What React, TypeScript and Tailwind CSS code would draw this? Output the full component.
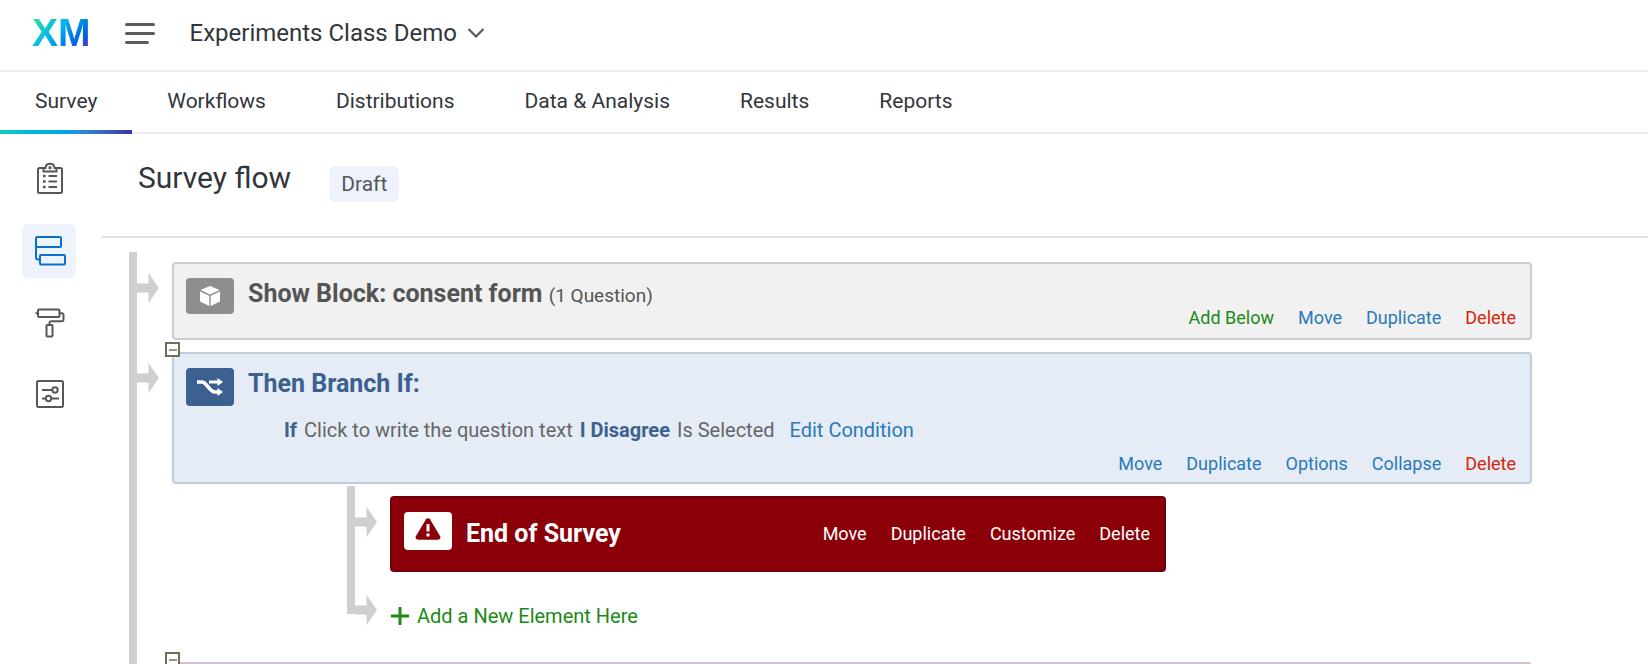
import type { ReactNode } from "react";

const tabs = ["Survey", "Workflows", "Distributions", "Data & Analysis", "Results", "Reports"];

type Action = { label: string; tone: string };

const blue = "text-[#2a7ab8]";
const red = "text-[#d3260b]";
const green = "text-[#1c8a17]";

const blockActions: Action[] = [
  { label: "Add Below", tone: green },
  { label: "Move", tone: blue },
  { label: "Duplicate", tone: blue },
  { label: "Delete", tone: red },
];

const branchActions: Action[] = [
  { label: "Move", tone: blue },
  { label: "Duplicate", tone: blue },
  { label: "Options", tone: blue },
  { label: "Collapse", tone: blue },
  { label: "Delete", tone: red },
];

const endActions: Action[] = [
  { label: "Move", tone: "text-white" },
  { label: "Duplicate", tone: "text-white" },
  { label: "Customize", tone: "text-white" },
  { label: "Delete", tone: "text-white" },
];

function Actions({ items }: { items: Action[] }) {
  return (
    <div className="flex gap-6 text-lg leading-6">
      {items.map((a) => (
        <button key={a.label} type="button" className={a.tone}>
          {a.label}
        </button>
      ))}
    </div>
  );
}

function Arrow() {
  return (
    <svg className="mt-[21px] shrink-0" width="22" height="30" viewBox="0 0 22 30" fill="#cfcfcf" aria-hidden="true">
      <path d="M0 10.5H11.500V0L22 15L11.500 30V19.5H0Z" />
    </svg>
  );
}

function Rail({ last = false }: { last?: boolean }) {
  return (
    <div className="flex w-[43px] shrink-0">
      <div className={last ? "h-10 w-2 bg-[#cfcfcf]" : "w-2 bg-[#cfcfcf]"} />
      <Arrow />
    </div>
  );
}

function FlowRow({ children, last = false }: { children: ReactNode; last?: boolean }) {
  return (
    <div className="flex">
      <Rail last={last} />
      <div className="min-w-0 flex-1 pt-2.5 pb-0.5">{children}</div>
    </div>
  );
}

function Toggle() {
  return (
    <button
      type="button"
      aria-label="Collapse element"
      className="absolute -top-3 -left-[9px] flex size-[15px] items-center justify-center border-2 border-[#6a7256] bg-white"
    >
      <span className="h-0.5 w-2 bg-[#949783]" />
    </button>
  );
}

function ClipboardIcon() {
  return (
    <svg width="32" height="34" viewBox="0 0 32 34" fill="none" stroke="#54585d" strokeWidth="2" aria-hidden="true">
      <path d="M9.5 6H5.5Q4 6 4 7.500V29.500Q4 31 5.500 31H26.500Q28 31 28 29.500V7.500Q28 6 26.500 6H22.500" />
      <path d="M9.500 6H11.500C11.700 0.200 20.300 0.200 20.500 6H22.500V9.500H9.500Z" />
      <path d="M14.500 14H23M14.500 19.500H23M14.500 25H23" strokeWidth="2.200" />
      <path d="M9 14h2.600M9 19.500h2.600M9 25h2.600" strokeWidth="2.600" />
      <circle cx="16" cy="5.700" r="0.700" />
    </svg>
  );
}

function FlowIcon() {
  return (
    <svg width="32" height="32" viewBox="0 0 32 32" fill="none" stroke="#0a70d0" strokeWidth="2" strokeLinejoin="round" aria-hidden="true">
      <rect x="2" y="2" width="25" height="10" rx="1" />
      <rect x="6" y="20" width="25" height="9.500" rx="1" />
      <path d="M2 11V22.500Q2 24.500 4 24.500H6" />
    </svg>
  );
}

function RollerIcon() {
  return (
    <svg width="32" height="32" viewBox="0 0 32 32" fill="none" stroke="#54585d" strokeWidth="2" strokeLinejoin="round" aria-hidden="true">
      <rect x="4" y="2.500" width="21.500" height="7.500" rx="1" />
      <path d="M1.500 6.200H4M25.500 6.200H28Q29.500 6.200 29.500 8V12Q29.500 14.200 27.500 14.200H17.500Q15.500 14.200 15.500 16V18" />
      <rect x="12.500" y="18" width="6" height="11.500" rx="0.800" />
    </svg>
  );
}

function OptionsIcon() {
  return (
    <svg width="32" height="32" viewBox="0 0 32 32" fill="none" stroke="#54585d" strokeWidth="2" aria-hidden="true">
      <rect x="3" y="2" width="26" height="26" rx="1.500" />
      <path d="M8 11H18M8 19.500H11.500M17.500 19.500H25" />
      <circle cx="21" cy="11" r="2.700" />
      <circle cx="14.500" cy="19.500" r="2.700" />
    </svg>
  );
}

function CubeIcon() {
  return (
    <svg width="22" height="22" viewBox="0 0 22 22" aria-hidden="true">
      <path d="M11 1L20.500 5L11 9.500L1.500 5Z" fill="#fff" />
      <path d="M1 6.500L10.300 10.800V21L1 16.500Z" fill="#fff" />
      <path d="M21 6.500L11.700 10.800V21L21 16.500Z" fill="#fff" />
    </svg>
  );
}

function BranchIcon() {
  return (
    <svg width="28" height="20" viewBox="0 0 28 20" fill="none" stroke="#fff" strokeWidth="3" aria-hidden="true">
      <path d="M1 5H6C11 5 13 15 19 15H23" strokeWidth="3.600" />
      <path d="M13 5H23" />
      <path d="M21.500 1L27 5L21.500 9ZM21.500 11L27 15L21.500 19Z" fill="#fff" stroke="none" />
    </svg>
  );
}

function WarningIcon() {
  return (
    <svg width="26" height="22" viewBox="0 0 26 22" aria-hidden="true">
      <path d="M11 1.300Q13 -0.700 15 1.300L25.300 18.500Q26 21.500 23 21.800H3Q0 21.500 0.700 18.500Z" fill="#8b0008" />
      <path d="M11.500 6H14.500V13.500H11.500ZM11.500 15.500H14.500V18.500H11.500Z" fill="#fff" />
    </svg>
  );
}

const sideItems = [
  { label: "Builder", icon: <ClipboardIcon />, active: false },
  { label: "Survey flow", icon: <FlowIcon />, active: true },
  { label: "Look and feel", icon: <RollerIcon />, active: false },
  { label: "Survey options", icon: <OptionsIcon />, active: false },
];

export default function App() {
  return (
    <div className="flex h-screen flex-col overflow-hidden bg-white font-[Roboto,sans-serif] text-[#32363b]">
      <header className="flex h-[72px] shrink-0 items-center border-b-2 border-[#ededed] pb-1 pl-8">
        <a
          href="#home"
          className="bg-[linear-gradient(135deg,#2fe0a0_10%,#00b4f0_42%,#0064dc_75%,#5a2ad8_92%)] bg-clip-text font-['Liberation_Sans',sans-serif] text-[39px] leading-10 font-bold text-transparent"
        >
          XM
        </a>
        <button type="button" aria-label="Menu" className="ml-[34px] flex w-[30px] flex-col gap-1.5">
          <span className="h-[3px] w-full rounded-full bg-[#595c61]" />
          <span className="h-[3px] w-full rounded-full bg-[#595c61]" />
          <span className="h-[3px] w-6 rounded-full bg-[#595c61]" />
        </button>
        <button type="button" className="ml-[35px] flex items-center gap-2.5 text-2xl">
          Experiments Class Demo
          <svg width="18" height="12" viewBox="0 0 18 12" fill="none" stroke="#54585d" strokeWidth="2.2" aria-hidden="true">
            <path d="M1.500 2L9 9.500L16.500 2" />
          </svg>
        </button>
      </header>

      <nav className="flex h-[62px] shrink-0 border-b-2 border-[#ededed] text-[21px]">
        {tabs.map((t, i) => (
          <a key={t} href={"#" + t.toLowerCase()} className="relative flex items-center px-[35px]">
            {t}
            {i === 0 && (
              <span className="absolute inset-x-0 -bottom-0.5 h-1 bg-linear-to-r from-[#12cbc4] via-[#00a2ee] to-[#3a35a8]" />
            )}
          </a>
        ))}
      </nav>

      <div className="flex min-h-0 flex-1">
        <aside className="flex w-[102px] shrink-0 flex-col gap-[18px] pt-[18px] pl-[22px]">
          {sideItems.map((s) => (
            <button
              key={s.label}
              type="button"
              aria-label={s.label}
              className={
                s.active
                  ? "flex size-[54px] items-center justify-center rounded-md bg-[#edf2fb] pl-0.5"
                  : "flex size-[54px] items-center justify-center rounded-md pl-0.5"
              }
            >
              {s.icon}
            </button>
          ))}
        </aside>

        <main className="min-w-0 flex-1">
          <div className="flex h-[104px] items-start gap-[38px] border-b-2 border-[#e2e2e2] pt-6 pl-9">
            <h1 className="text-[30px] leading-10">Survey flow</h1>
            <span className="mt-2 rounded-md bg-[#edf2fb] px-3 py-1 text-[21px] leading-7 text-[#54585d]">Draft</span>
          </div>

          <div className="pt-3.5 pr-[116px] pl-[27px]">
            <FlowRow>
              <section className="flex justify-between rounded border-2 border-[#cccccc] bg-[#f1f1f1] pt-3.5 pr-3.5 pb-2 pl-3">
                <div className="flex items-start gap-3.5 pb-4">
                  <span className="flex h-9 w-12 items-center justify-center rounded bg-[#8e8e8e]">
                    <CubeIcon />
                  </span>
                  <h2 className="text-[25px] leading-8 font-bold text-[#555555]">
                    Show Block: consent form <span className="text-[19px] font-normal">(1 Question)</span>
                  </h2>
                </div>
                <div className="self-end">
                  <Actions items={blockActions} />
                </div>
              </section>
            </FlowRow>

            <FlowRow>
              <section className="relative rounded border-2 border-[#c0cddb] bg-[#e5ecf5] pt-3.5 pr-3.5 pb-1.5 pl-3">
                <Toggle />
                <div className="flex items-start gap-3.5">
                  <span className="flex h-[38px] w-12 items-center justify-center rounded bg-[#3c6190]">
                    <BranchIcon />
                  </span>
                  <h2 className="text-[25px] leading-8 font-bold text-[#3c6190]">Then Branch If:</h2>
                </div>
                <p className="mt-2.5 flex gap-[7px] pl-[98px] text-xl leading-7 text-[#666666]">
                  <b className="text-[#3c6190]">If</b>
                  <span>Click to write the question text</span>
                  <b className="text-[#3c6190]">I Disagree</b>
                  <span>Is Selected</span>
                  <a href="#edit-condition" className="ml-2 text-[#2a7ab8]">
                    Edit Condition
                  </a>
                </p>
                <div className="mt-2 flex justify-end">
                  <Actions items={branchActions} />
                </div>
              </section>
            </FlowRow>

            <div className="flex gap-[210px]">
              <div className="w-2 shrink-0 bg-[#cfcfcf]" />
              <div className="min-w-0 flex-1">
                <FlowRow>
                  <section className="flex max-w-[776px] items-center justify-between rounded border-2 border-[#72000a] bg-[#8b0008] py-3.5 pr-3.5 pl-3">
                    <div className="flex items-center gap-3.5">
                      <span className="mb-1.5 flex h-[38px] w-12 items-center justify-center rounded bg-white pb-1">
                        <WarningIcon />
                      </span>
                      <h2 className="text-[25px] leading-8 font-bold text-white">End of Survey</h2>
                    </div>
                    <Actions items={endActions} />
                  </section>
                </FlowRow>
                <FlowRow last>
                  <button type="button" className="mt-[18px] mb-5 flex items-center gap-[7px] text-xl leading-7 text-[#1c8a17]">
                    <svg width="20" height="20" viewBox="0 0 20 20" stroke="#1c8a17" strokeWidth="3" aria-hidden="true">
                      <path d="M10 1V19M1 10H19" />
                    </svg>
                    Add a New Element Here
                  </button>
                </FlowRow>
              </div>
            </div>

            <FlowRow>
              <section className="relative min-h-20 rounded border-2 border-[#cfbfd0] bg-[#f4edf5]">
                <Toggle />
              </section>
            </FlowRow>
          </div>
        </main>
      </div>
    </div>
  );
}
